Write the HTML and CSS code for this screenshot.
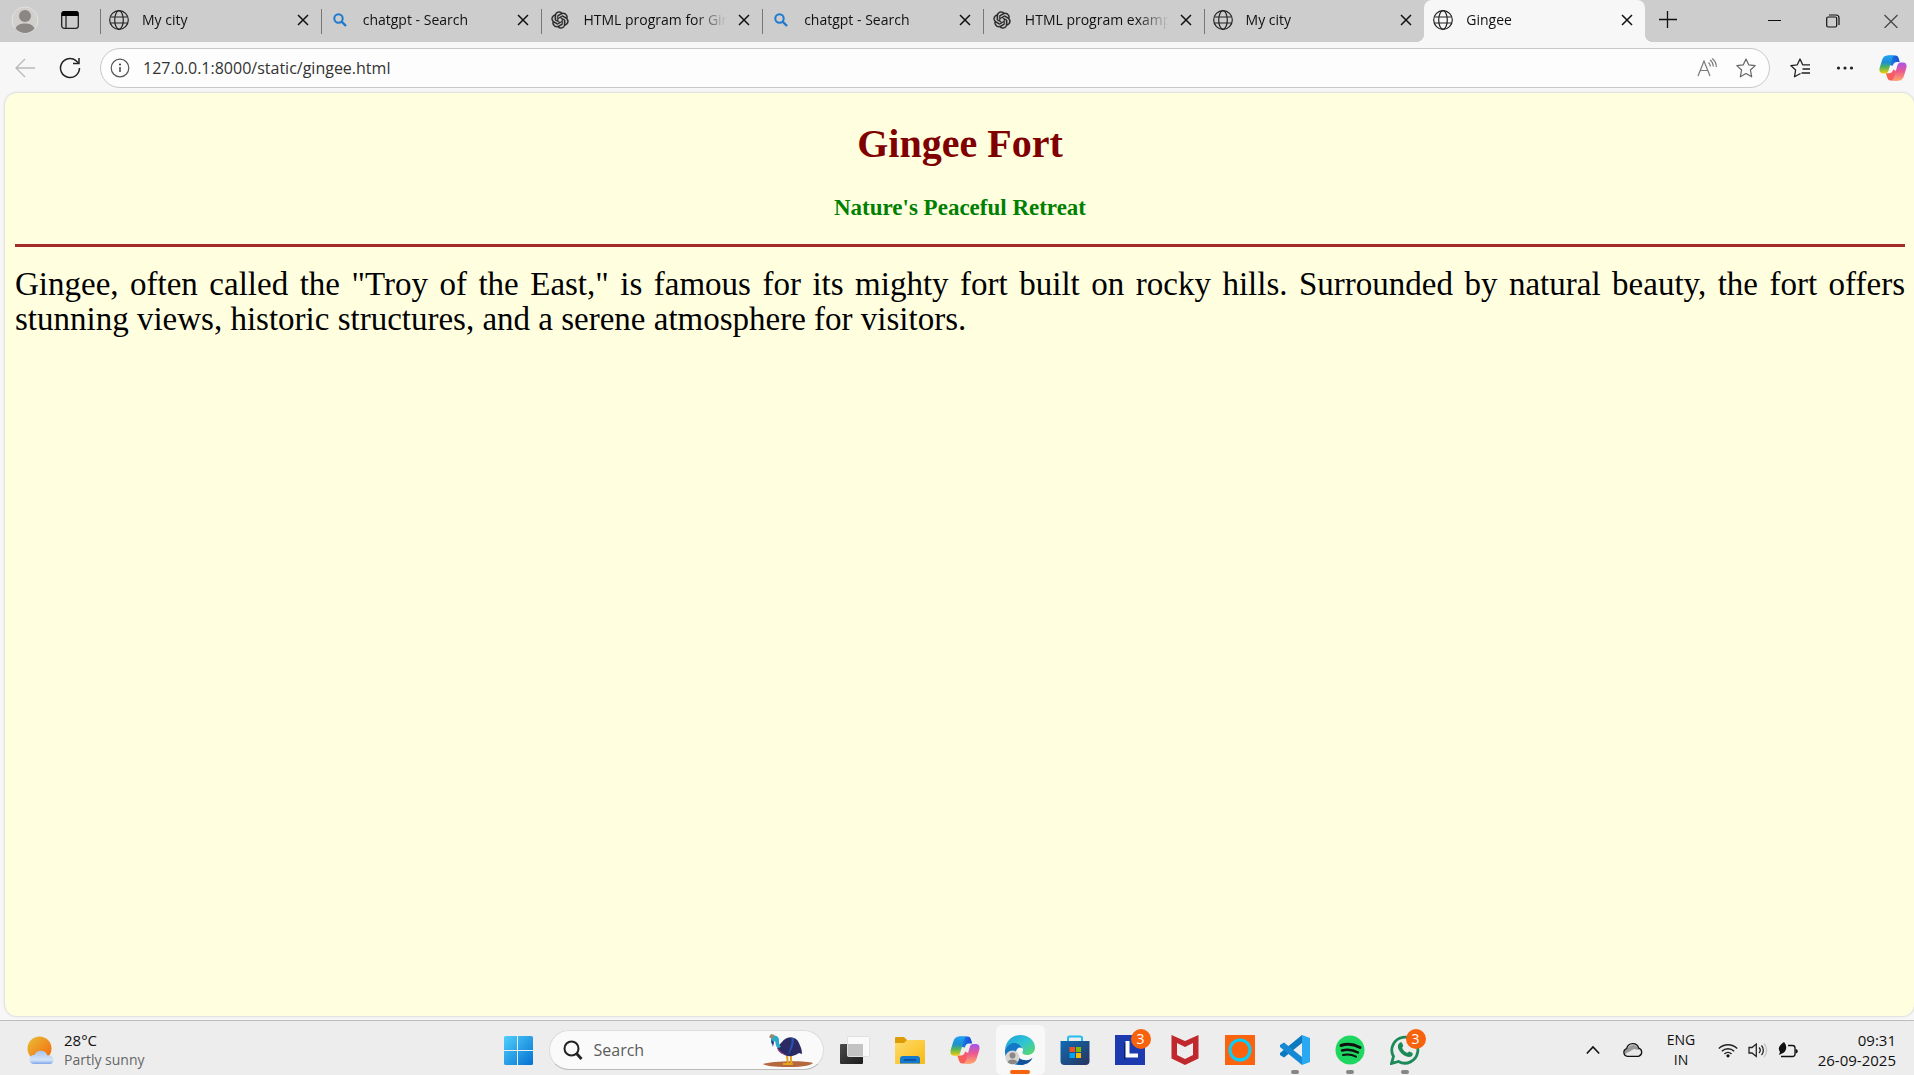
FILE: index.html
```html
<!DOCTYPE html>
<html lang="en">
<head>
<meta charset="utf-8">
<meta name="viewport" content="width=device-width, initial-scale=1">
<title>Gingee</title>
<link rel="stylesheet" href="styles.css">
</head>
<body>
<svg class="defs" width="0" height="0" aria-hidden="true">
  <defs>
    <linearGradient id="cp-left" x1="0" y1="0" x2="0" y2="1"><stop offset="0" stop-color="#1ba4f5"/><stop offset=".4" stop-color="#1f8fd0"/><stop offset=".65" stop-color="#52b45c"/><stop offset="1" stop-color="#f4cd0b"/></linearGradient>
    <linearGradient id="cp-right" x1="0" y1="0" x2="0" y2="1"><stop offset="0" stop-color="#a453f0"/><stop offset=".5" stop-color="#ec5a8e"/><stop offset="1" stop-color="#ffa768"/></linearGradient>
    <linearGradient id="cp-top" x1="0" y1="0" x2="1" y2="0"><stop offset="0" stop-color="#1a8be8"/><stop offset="1" stop-color="#1a49d8"/></linearGradient>
    <linearGradient id="cp-bottom" x1="0" y1="0" x2="1" y2="0"><stop offset="0" stop-color="#f6663c"/><stop offset="1" stop-color="#f8528e"/></linearGradient>
    <linearGradient id="win" x1="0" y1="0" x2="1" y2="1"><stop offset="0" stop-color="#4fd0fb"/><stop offset="1" stop-color="#0470d2"/></linearGradient>
    <linearGradient id="sun" x1="0" y1="0" x2="1" y2="1"><stop offset="0" stop-color="#e8c036"/><stop offset="1" stop-color="#f5640c"/></linearGradient>
    <linearGradient id="cloud" x1="0" y1="0" x2="0" y2="1"><stop offset="0" stop-color="#a9c4f2"/><stop offset=".7" stop-color="#d5e4f8"/><stop offset="1" stop-color="#7fa6ea"/></linearGradient>
    <linearGradient id="dark" x1="0" y1="0" x2="1" y2="1"><stop offset="0" stop-color="#4a4a4a"/><stop offset="1" stop-color="#1c1c1c"/></linearGradient>
    <linearGradient id="folder" x1="0" y1="0" x2="1" y2="1"><stop offset="0" stop-color="#ffdc6c"/><stop offset="1" stop-color="#f8b912"/></linearGradient>
    <linearGradient id="edge-top" x1="0" y1="0" x2="1" y2="1"><stop offset="0" stop-color="#1c9fdc"/><stop offset=".5" stop-color="#2fc4d4"/><stop offset="1" stop-color="#5edb58"/></linearGradient>
    <linearGradient id="store" x1="0" y1="0" x2="1" y2="1"><stop offset="0" stop-color="#0f6cb5"/><stop offset="1" stop-color="#28335c"/></linearGradient>
    <symbol id="globe" viewBox="0 0 20 20"><g fill="none" stroke="#222" stroke-width="1.2"><circle cx="10" cy="10" r="9.3"/><ellipse cx="10" cy="10" rx="4.3" ry="9.3"/><path d="M1.5 7h17M1.5 13h17"/></g></symbol>
    <symbol id="lens" viewBox="0 0 20 20"><g fill="none" stroke="#1b79cf" stroke-width="2"><circle cx="8.5" cy="8.5" r="4.2"/><path d="m11.5 11.5 4.5 4.5" stroke-width="2.4"/></g></symbol>
    <symbol id="knot" viewBox="-2 -2 28 28"><path fill="#222" stroke="#222" stroke-width=".5" d="M22.2819 9.8211a5.9847 5.9847 0 0 0-.5157-4.9108 6.0462 6.0462 0 0 0-6.5098-2.9A6.0651 6.0651 0 0 0 4.9807 4.1818a5.9847 5.9847 0 0 0-3.9977 2.9 6.0462 6.0462 0 0 0 .7427 7.0966 5.98 5.98 0 0 0 .511 4.9107 6.051 6.051 0 0 0 6.5146 2.9001A5.9847 5.9847 0 0 0 13.2599 24a6.0557 6.0557 0 0 0 5.7718-4.2058 5.9894 5.9894 0 0 0 3.9977-2.9001 6.0557 6.0557 0 0 0-.7475-7.0729zm-9.022 12.6081a4.4755 4.4755 0 0 1-2.8764-1.0408l.1419-.0804 4.7783-2.7582a.7948.7948 0 0 0 .3927-.6813v-6.7369l2.02 1.1686a.071.071 0 0 1 .038.052v5.5826a4.504 4.504 0 0 1-4.4945 4.4944zm-9.6607-4.1254a4.4708 4.4708 0 0 1-.5346-3.0137l.142.0852 4.783 2.7582a.7712.7712 0 0 0 .7806 0l5.8428-3.3685v2.3324a.0804.0804 0 0 1-.0332.0615L9.74 19.9502a4.4992 4.4992 0 0 1-6.1408-1.6464zM2.3408 7.8956a4.485 4.485 0 0 1 2.3655-1.9728V11.6a.7664.7664 0 0 0 .3879.6765l5.8144 3.3543-2.0201 1.1685a.0757.0757 0 0 1-.071 0l-4.8303-2.7865A4.504 4.504 0 0 1 2.3408 7.872zm16.5963 3.8558L13.1038 8.364 15.1192 7.2a.0757.0757 0 0 1 .071 0l4.8303 2.7913a4.4944 4.4944 0 0 1-.6765 8.1042v-5.6772a.79.79 0 0 0-.407-.667zm2.0107-3.0231l-.142-.0852-4.7735-2.7818a.7759.7759 0 0 0-.7854 0L9.409 9.2297V6.8974a.0662.0662 0 0 1 .0284-.0615l4.8303-2.7866a4.4992 4.4992 0 0 1 6.6802 4.66zM8.3065 12.863l-2.02-1.1638a.0804.0804 0 0 1-.038-.0567V6.0742a4.4992 4.4992 0 0 1 7.3757-3.4537l-.142.0805L8.704 5.459a.7948.7948 0 0 0-.3927.6813zm1.0976-2.3654l2.602-1.4998 2.6069 1.4998v2.9994l-2.5974 1.4997-2.6067-1.4997Z"/></symbol>
    <symbol id="cross" viewBox="0 0 20 20"><path d="m5 5 10 10M15 5 5 15" fill="none" stroke="#111" stroke-width="1.5"/></symbol>
    <symbol id="copilot" viewBox="0 0 30 30">
      <path fill="url(#cp-top)" d="M9 1.500h8.500c2 0 3 1 3.700 3.500l1 3.500h-3c-2.600 0-3.500 1.200-4.400 4L12 12z"/>
      <path fill="url(#cp-bottom)" d="M21 28.500h-8.500c-2 0-3-1-3.700-3.500l-1.500-4.500h3.500c2.600 0 3.500-1.200 4.400-4L18 18z"/>
      <path fill="url(#cp-left)" d="M9.500 1.500h7.500c-1.700.4-2.600 2-3.300 4.300l-3.400 11.700c-.7 2.300-1.600 3.300-3.800 3.300H4.200C.8 20.800-.2 18 .8 14.500L3.300 6.500c1-3.500 3-5 6.200-5z"/>
      <path fill="url(#cp-right)" d="M20.500 28.500H13c1.700-.4 2.600-2 3.300-4.300l3.400-11.900c.7-2.300 1.600-3.300 3.800-3.300h2.300c3.400 0 4.400 2.800 3.400 6.300l-2.500 8.200c-1 3.500-3 5-6.200 5z"/>
    </symbol>
  </defs>
</svg>

<header class="browser">
  <div class="tabstrip">
    <div class="tabstrip-tools">
      <button class="icon-button" type="button" aria-label="Profile"><svg width="28" height="28" viewBox="0 0 28 28"><circle cx="14" cy="14" r="13" fill="#d2d0ce" stroke="#e4e2de"/><circle cx="14" cy="10" r="6" fill="#8b8785"/><path d="M4.500 22.500C6 18.500 10 17.500 14 17.500s8 1 9.500 5A13 13 0 0 1 14 27a13 13 0 0 1-9.500-4.500z" fill="#8b8785"/></svg></button>
      <button class="icon-button" type="button" aria-label="Tab actions"><svg width="20" height="20" viewBox="0 0 20 20"><rect x="1.700" y="1.700" width="16.600" height="16.600" rx="2.500" fill="none" stroke="#222" stroke-width="1.300"/><path d="M1.500 6V3.500a2.500 2.500 0 0 1 2.500-2.500h12a2.500 2.500 0 0 1 2.500 2.500V6z" fill="#000"/><path d="M6 6v12" stroke="#222" stroke-width="1.300"/></svg></button>
    </div>
    <nav class="tabs" aria-label="Open tabs">
      <div class="tab"><svg class="tab-icon"><use href="#globe"/></svg><a class="tab-title" href="#">My city</a><button class="tab-close" type="button" aria-label="Close tab"><svg><use href="#cross"/></svg></button></div>
      <div class="tab"><svg class="tab-icon"><use href="#lens"/></svg><a class="tab-title" href="#">chatgpt - Search</a><button class="tab-close" type="button" aria-label="Close tab"><svg><use href="#cross"/></svg></button></div>
      <div class="tab"><svg class="tab-icon"><use href="#knot"/></svg><a class="tab-title" href="#">HTML program for Gingee</a><button class="tab-close" type="button" aria-label="Close tab"><svg><use href="#cross"/></svg></button></div>
      <div class="tab"><svg class="tab-icon"><use href="#lens"/></svg><a class="tab-title" href="#">chatgpt - Search</a><button class="tab-close" type="button" aria-label="Close tab"><svg><use href="#cross"/></svg></button></div>
      <div class="tab"><svg class="tab-icon"><use href="#knot"/></svg><a class="tab-title" href="#">HTML program example</a><button class="tab-close" type="button" aria-label="Close tab"><svg><use href="#cross"/></svg></button></div>
      <div class="tab"><svg class="tab-icon"><use href="#globe"/></svg><a class="tab-title" href="#">My city</a><button class="tab-close" type="button" aria-label="Close tab"><svg><use href="#cross"/></svg></button></div>
      <div class="tab tab-active"><svg class="tab-icon"><use href="#globe"/></svg><a class="tab-title" href="#" aria-current="page">Gingee</a><button class="tab-close" type="button" aria-label="Close tab"><svg><use href="#cross"/></svg></button></div>
    </nav>
    <button class="icon-button" type="button" aria-label="New tab"><svg width="20" height="20" viewBox="0 0 20 20"><path d="M1 9.500h18M9.500 1v17" stroke="#111" stroke-width="1.300"/></svg></button>
    <div class="window-controls">
      <button class="window-button" type="button" aria-label="Minimise"><svg width="14" height="14" viewBox="0 0 14 14"><path d="M0 6.500h13" stroke="#111"/></svg></button>
      <button class="window-button" type="button" aria-label="Restore"><svg width="14" height="14" viewBox="0 0 14 14" fill="none" stroke="#111" stroke-width="1.200"><rect x=".7" y="3" width="10" height="10" rx="1.500"/><path d="M3 1h7a3 3 0 0 1 3 3v7"/></svg></button>
      <button class="window-button" type="button" aria-label="Close window"><svg width="14" height="14" viewBox="0 0 14 14"><path d="m.5 1 13 13M13.500 1l-13 13" stroke="#444" stroke-width="1.200"/></svg></button>
    </div>
  </div>

  <div class="toolbar">
    <div class="toolbar-nav">
      <button class="icon-button" type="button" aria-label="Back" disabled><svg width="20" height="20" viewBox="0 0 20 20" fill="none" stroke="#b9b9b9" stroke-width="1.300"><path d="M20 10H1M10 1 1 10l9 9"/></svg></button>
      <button class="icon-button" type="button" aria-label="Refresh"><svg width="22" height="22" viewBox="0 0 22 22" fill="none" stroke="#222" stroke-width="1.500"><path d="M20.500 11A9.500 9.500 0 1 1 17 3.700L19.500 6"/><path d="M20 1v5.500h-6"/></svg></button>
    </div>
    <div class="address-bar">
      <svg width="20" height="20" viewBox="0 0 20 20" aria-hidden="true"><circle cx="10" cy="10" r="8.800" fill="none" stroke="#555" stroke-width="1.200"/><circle cx="10" cy="6.500" r="1.100" fill="#444"/><path d="M10 9v5" stroke="#444" stroke-width="1.500"/></svg>
      <input class="address-input" type="text" aria-label="Address" value="127.0.0.1:8000/static/gingee.html">
      <button class="icon-button" type="button" aria-label="Read aloud"><svg width="20" height="20" viewBox="0 0 20 20" fill="none" stroke="#777" stroke-width="1.200"><path d="M1 18 7 3l6 15M3.200 12.500h7.600M11.500 4.500c1.200 1 1.800 2.500 1.800 4M13 2c2.200 1.500 3.200 3.500 3.200 6.500M15 .5c3 2 4.300 5 4.300 8.500"/></svg></button>
      <button class="icon-button" type="button" aria-label="Add to favourites"><svg width="20" height="20" viewBox="0 0 20 20" fill="none" stroke="#666" stroke-width="1.200" stroke-linejoin="round"><path d="m10 1 2.700 5.800 6.500.8-4.800 4.400 1.300 6.800L10 15.500l-5.700 3.300 1.300-6.800L.8 7.600l6.500-.8z"/></svg></button>
    </div>
    <div class="toolbar-actions">
      <button class="icon-button" type="button" aria-label="Favourites"><svg width="20" height="20" viewBox="0 0 20 20" fill="none" stroke="#222" stroke-width="1.300" stroke-linejoin="round"><path d="M10.500 15.500 4.500 18.800l1.100-6.800L.8 7.600l6.500-.8L10 1l2.700 5.800h7.300M12.500 11H20M11.500 15H20"/></svg></button>
      <button class="icon-button" type="button" aria-label="Settings and more"><svg width="20" height="20" viewBox="0 0 20 20" fill="#222"><circle cx="3.500" cy="10" r="1.600"/><circle cx="10" cy="10" r="1.600"/><circle cx="16.500" cy="10" r="1.600"/></svg></button>
      <button class="icon-button copilot-button" type="button" aria-label="Copilot"><svg width="28" height="28"><use href="#copilot"/></svg></button>
    </div>
  </div>
</header>

<main class="page">
  <h1 class="page-title">Gingee Fort</h1>
  <h2 class="page-subtitle">Nature's Peaceful Retreat</h2>
  <hr class="page-rule">
  <p class="page-text">Gingee, often called the "Troy of the East," is famous for its mighty fort built on rocky hills. Surrounded by natural beauty, the fort offers stunning views, historic structures, and a serene atmosphere for visitors.</p>
</main>

<footer class="taskbar">
  <button class="weather" type="button">
    <svg width="28" height="28" viewBox="0 0 28 28" aria-hidden="true"><circle cx="12.500" cy="12.500" r="12" fill="url(#sun)"/><path d="M7 28a4.500 4.500 0 0 1 0-9h.5a7 7 0 0 1 13 .5 4.300 4.300 0 0 1 3 8.500z" fill="url(#cloud)"/></svg>
    <span class="stacked"><span>28°C</span><span class="muted">Partly sunny</span></span>
  </button>

  <div class="dock">
    <button class="app" type="button" aria-label="Start"><svg width="30" height="30" viewBox="0 0 30 30"><path fill="url(#win)" d="M2.500 1H14v14H1V2.500A1.500 1.500 0 0 1 2.500 1zM15 1h13.500A1.500 1.500 0 0 1 30 2.500V15H15zM1 16h13v14H2.500A1.500 1.500 0 0 1 1 28.500zM15 16h15v12.500a1.500 1.500 0 0 1-1.500 1.500H15z"/><path d="M14.500 0v30M0 15.500h30" stroke="#ededed"/></svg></button>
    <div class="search-box">
      <svg width="20" height="20" viewBox="0 0 20 20" fill="none" stroke="#222" stroke-width="2" aria-hidden="true"><circle cx="8.500" cy="8.500" r="7"/><path d="m13.500 13.500 5 5.500" stroke-width="2.800"/></svg>
      <input class="search-input" type="text" aria-label="Search" placeholder="Search">
      <svg width="50" height="34" viewBox="0 0 50 34" aria-hidden="true">
        <path d="M0 31c6-3 42-4 50-1-2 2-8 4-24 4S3 33 0 31z" fill="#b5673d"/>
        <path d="M20 31h10M25 31l-1-8M28 30v-8" stroke="#e8a31c" stroke-width="2" fill="none"/>
        <path d="M14 13c3 0 5-6 10-8 5-2 10 0 12 5 1 3 3 5 3 11l-3-1c-4 3-11 5-16 1-3-2-5-4-6-8z" fill="#2c2a63"/>
        <path d="M28 5c2 2-1 10-3 17 4-5 6-11 6-17z" fill="#2455b5"/>
        <path d="M14 14c3 5 7 7 11 8l-6-1c-3-2-5-4-5-7z" fill="#8b3b82"/>
        <path d="M8 5c3-4 8-2 8 2 0 3 0 5 2 7l-3 1c-3-2-2-5-3-7l-4 3z" fill="#2aa9c9"/><path d="m8 7 3 2-1 5z" fill="#34307c"/><path d="m6 4 2-3 4 1-3 4z" fill="#9e8770"/>
      </svg>
    </div>
    <button class="app" type="button" aria-label="Task view"><svg width="30" height="30" viewBox="0 0 30 30"><rect x="0" y="9" width="23" height="20" rx="1" fill="url(#dark)"/><rect x="7.500" y="1.500" width="22" height="20" rx="1" fill="#fafafa" stroke="#e0e0e0"/><path d="M8 9h15v12H8z" fill="#c3c3c3"/></svg></button>
    <button class="app" type="button" aria-label="File Explorer"><svg width="30" height="30" viewBox="0 0 30 30"><path d="M0 3a1 1 0 0 1 1-1h8l4 4v4H0z" fill="#dd9c06"/><path d="M0 8h9l3-3h17a1 1 0 0 1 1 1v22a1 1 0 0 1-1 1H1a1 1 0 0 1-1-1z" fill="url(#folder)"/><path d="M5 28.500V24a3 3 0 0 1 3-3h14a3 3 0 0 1 3 3v4.500z" fill="#1379d1"/><path d="M9 25h12" stroke="#0a4b92" stroke-width="1.500"/></svg></button>
    <button class="app" type="button" aria-label="Copilot"><svg width="30" height="30"><use href="#copilot"/></svg></button>
    <button class="app app-open app-current" type="button" aria-label="Microsoft Edge"><svg width="30" height="30" viewBox="0 0 30 30"><path d="M0 14C1 6 7 0 15 0c9 0 15 6 15 12.500 0 5-4 7.500-8 7.500-3.500 0-5-1.500-4.500-3 1-2 .5-4-1-5.500C12 7 3 8 0 14z" fill="url(#edge-top)"/><path d="M0 15C2 9 8 7 12 8.500c3 1 5 3 5.500 5-3-2.500-7 0-6.500 5 .5 5 4 9 8 11C8 32-1 25 0 15z" fill="#1179c6"/><path d="M11 17c0 6 7 9 12 8 2-.3 3-1.500 4.500-2C25 28 20 30 16 30c-7-2-9-9-5-13z" fill="#12509b"/><circle cx="7.500" cy="22.500" r="7" fill="#d6d3d1"/><circle cx="7.500" cy="20.500" r="3" fill="#8b8785"/><path d="M2.500 27c1-3.500 9-3.500 10 0-3 3-7 3-10 0z" fill="#8b8785"/></svg></button>
    <button class="app" type="button" aria-label="Microsoft Store"><svg width="30" height="30" viewBox="0 0 30 30"><path d="M8 7V3a1.500 1.500 0 0 1 1.500-1.500h11A1.500 1.500 0 0 1 22 3v4" fill="none" stroke="#24bdf2" stroke-width="2"/><path d="M.5 6h29v20a4 4 0 0 1-4 4h-21a4 4 0 0 1-4-4z" fill="url(#store)"/><path d="M9.500 12H15v5H9.500z" fill="#f25022"/><path d="M16 12h5v5h-5z" fill="#7fba00"/><path d="M9.500 18H15v5H9.500z" fill="#00a4ef"/><path d="M16 18h5v5h-5z" fill="#ffb900"/></svg></button>
    <button class="app" type="button" aria-label="Lenovo Vantage, 3 notifications"><svg width="30" height="30" viewBox="0 0 30 30"><path d="M0 0h30v30H0z" fill="#1d3aae"/><path d="m12 6-3 3v16l3-3z" fill="#0e1f66"/><path d="M12.500 6v14.500H23" fill="none" stroke="#fff" stroke-width="4"/></svg><span class="badge">3</span></button>
    <button class="app" type="button" aria-label="McAfee"><svg width="30" height="30" viewBox="0 0 30 30"><path d="m1.500 0 13.500 6L28.500 0v23.500L15 30 1.500 23.500zM7 8v12l8 4 8-4V8l-8 4z" fill="#c0282d" fill-rule="evenodd"/></svg></button>
    <button class="app" type="button" aria-label="Alexa"><svg width="30" height="30" viewBox="0 0 30 30"><path d="M0 0h30v30H0z" fill="#fa6410"/><circle cx="15" cy="15" r="10" fill="none" stroke="#0bcdf5" stroke-width="3"/><path d="M12 23.500c2 .5 3 1.500 2 3.500l7-4.500z" fill="#0bcdf5"/></svg></button>
    <button class="app app-open" type="button" aria-label="Visual Studio Code"><svg width="30" height="30" viewBox="0 0 30 30"><path d="M22 0v8L4 22.500 0 20v-2z" fill="#0c78be"/><path d="M22 30v-8L4 7.500 0 10v2z" fill="#1688d4"/><path d="m22 0 8 3v24l-8 3z" fill="#2aa8f2"/></svg></button>
    <button class="app app-open" type="button" aria-label="Spotify"><svg width="30" height="30" viewBox="0 0 30 30"><circle cx="15" cy="15" r="14.500" fill="#1ed760"/><g fill="none" stroke="#111" stroke-linecap="round"><path d="M6 10.500c6-2 13-1.200 19 2" stroke-width="3"/><path d="M7 15.500c5.500-1.500 11-.7 16 2" stroke-width="2.400"/><path d="M8 20c4.500-1.200 9-.5 13 1.700" stroke-width="2"/></g></svg></button>
    <button class="app app-open" type="button" aria-label="WhatsApp, 3 notifications"><svg width="30" height="30" viewBox="0 0 30 30"><path d="m1.500 28.500 2-7A13 13 0 1 1 8.500 26.500z" fill="none" stroke="#1c8a58" stroke-width="2.800"/><path d="M10 7.500c1-.5 2 0 2.300 1l.9 2.300c.2.700-1.200 1.700-1 2.200 1 2.300 2.600 3.800 5 4.800.6.200 1.500-1.600 2.200-1.400l2.700 1.300c1.200.6.600 2.500-.1 3.200-1.500 1.400-3.600 1.300-5.500.6-4-1.500-6.500-4-8-7.300-1-2.300-1-5 1.500-6.700z" fill="#1c8a58"/></svg><span class="badge">3</span></button>
  </div>

  <div class="tray">
    <button class="tray-button" type="button" aria-label="Show hidden icons"><svg width="14" height="10" viewBox="0 0 14 10"><path d="m.8 8.500 6.200-6.500 6.200 6.500" fill="none" stroke="#111" stroke-width="1.600"/></svg></button>
    <button class="tray-button" type="button" aria-label="OneDrive"><svg width="20" height="14" viewBox="0 0 20 14"><path d="M4.500 13.300a4 4 0 0 1-.8-7.800 6.200 6.200 0 0 1 12-.3 4.200 4.200 0 0 1-.2 8.100z" fill="#e9e9e9"/><path d="M2 11c-1-3 1-6 3-6 2-4 8-4 10 0l1 2-5-1z" fill="#9a9a9a"/><path d="M4.500 13.300a4 4 0 0 1-.8-7.800 6.200 6.200 0 0 1 12-.3 4.200 4.200 0 0 1-.2 8.100z" fill="none" stroke="#111" stroke-width="1.300"/></svg></button>
    <button class="tray-button language" type="button"><span>ENG</span><span>IN</span></button>
    <button class="tray-button tray-status" type="button" aria-label="Network, sound and battery">
      <svg width="20" height="16" viewBox="0 0 20 16" fill="none" stroke="#222" stroke-width="1.400"><path d="M.8 6.500a13 13 0 0 1 18.400 0M3.800 9.300a9 9 0 0 1 12.400 0M6.500 12a5 5 0 0 1 7 0"/><circle cx="10" cy="13.800" r="1.600" fill="#111" stroke="none"/></svg>
      <svg width="20" height="16" viewBox="0 0 20 16" fill="none" stroke="#222" stroke-width="1.300"><path d="M1 5.500h3L8.300 2v12.500L4 11H1z"/><path d="M11 5.500a4 4 0 0 1 0 5.500M13.500 3.500a7 7 0 0 1 0 9.500"/><path d="M16 1.500c3.500 4 3.500 9.500 0 13.500" stroke="#c4c4c4"/></svg>
      <svg width="20" height="16" viewBox="0 0 20 16"><path d="M10 3.500h4.500A2.500 2.500 0 0 1 17 6v6a2.500 2.500 0 0 1-2.500 2.500H3" fill="none" stroke="#111" stroke-width="1.300"/><path d="M17.500 7c3 0 3 4.500 0 4.500z" fill="#111"/><path d="M6 0c2.500 3 3.500 7 0 10.500L1 13l1-3C-1 6 2 3 6 0z" fill="#111"/></svg>
    </button>
    <button class="tray-button clock" type="button"><span>09:31</span><span>26-09-2025</span></button>
  </div>
</footer>
</body>
</html>
```
FILE: styles.css
```css
* {
  box-sizing: border-box;
}

body {
  margin: 0;
  min-height: 100vh;
  display: flex;
  flex-direction: column;
  background: #f7f7f7;
  color: #111;
  font-family: "Open Sans", "Noto Sans", sans-serif;
  font-size: 15px;
}

.defs {
  position: absolute;
}

button {
  padding: 0;
  border: 0;
  background: none;
  color: inherit;
  font: inherit;
}

svg {
  display: block;
  flex: none;
}

.icon-button {
  display: grid;
  place-items: center;
  flex: none;
  width: 45px;
  height: 40px;
}

/* Tab strip */

.tabstrip {
  display: flex;
  height: 42px;
  background: #cdcdcd;
}

.tabstrip-tools,
.toolbar-nav {
  display: flex;
  flex: none;
  width: 100px;
  padding-left: 2px;
}

.tabs {
  display: grid;
  grid-template-columns: repeat(7, minmax(0, 1fr));
  flex: 0 1 1545px;
  min-width: 0;
}

.tab {
  position: relative;
  display: flex;
  align-items: center;
  padding: 0 8px 2px 9px;
}

.tab::before {
  content: "";
  position: absolute;
  left: 0;
  top: 9px;
  width: 1px;
  height: 25px;
  background: #777;
}

.tab-icon {
  width: 20px;
  height: 20px;
}

.tab-title {
  flex: 1;
  min-width: 0;
  margin: 0 7px 0 13px;
  overflow: hidden;
  white-space: nowrap;
  color: #111;
  font-size: 14px;
  line-height: 20px;
  text-decoration: none;
  mask-image: linear-gradient(to left, transparent, #000 32px);
}

.tab-close {
  width: 20px;
  height: 20px;
}

.tab-close svg {
  width: 20px;
  height: 20px;
}

.tab-active {
  background: #f7f7f7;
  border-radius: 8px 8px 0 0;
}

.tab-active::before,
.tab-active::after {
  content: "";
  position: absolute;
  top: auto;
  bottom: 0;
  width: 8px;
  height: 8px;
}

.tab-active::before {
  left: -8px;
  background: radial-gradient(circle at 0 0, #cdcdcd 8px, #f7f7f7 8px);
}

.tab-active::after {
  right: -8px;
  background: radial-gradient(circle at 100% 0, #cdcdcd 8px, #f7f7f7 8px);
}

.window-controls {
  display: flex;
  gap: 12px;
  margin-left: auto;
}

.window-button {
  display: grid;
  place-items: center;
  width: 46px;
  height: 42px;
}

/* Toolbar */

.toolbar {
  display: flex;
  align-items: center;
  height: 51px;
}

.address-bar {
  display: flex;
  align-items: center;
  flex: 1;
  min-width: 0;
  height: 40px;
  padding: 0 4px 0 9px;
  border: 1px solid #c8c8c8;
  border-radius: 20px;
  background: #fdfdfd;
}

.address-bar .icon-button {
  width: 39px;
}

.address-input,
.search-input {
  flex: 1;
  min-width: 0;
  padding: 0;
  border: 0;
  outline: 0;
  background: none;
  color: #333;
  font: inherit;
}

.address-input {
  margin-left: 13px;
  font-size: 16px;
}

.toolbar-actions {
  display: flex;
  padding-left: 7px;
}

.copilot-button {
  width: 42px;
  margin-left: 5px;
}

/* Document */

.page {
  flex: 1;
  margin: 0 0 4px 5px;
  padding: 28px 9px 28px 10px;
  border-radius: 12px;
  background: #ffffe0;
  box-shadow: 0 0 2px 1px #dcdce0;
  color: #000;
  font-family: Georgia, "Liberation Serif", serif;
}

.page-title,
.page-subtitle {
  margin: 0;
  font-family: "Liberation Serif", serif;
  text-align: center;
}

.page-title {
  color: #800000;
  font-size: 40px;
  line-height: 46px;
}

.page-subtitle {
  margin-top: 27px;
  color: #008000;
  font-size: 23px;
  line-height: 27px;
}

.page-rule {
  height: 3px;
  margin: 23px 0 20px;
  border: 0;
  background: #a52a2a;
}

.page-text {
  margin: 0;
  font-size: 33px;
  line-height: 35px;
  text-align: justify;
}

/* Taskbar */

.taskbar {
  display: grid;
  grid-template-columns: 1fr auto 1fr;
  align-items: center;
  height: 55px;
  padding: 4px 18px 0 27px;
  border-top: 1px solid #bdbdbd;
  background: #ededed;
  line-height: 20px;
}

.weather {
  display: flex;
  align-items: center;
  gap: 9px;
  justify-self: start;
  text-align: left;
}

.stacked {
  display: flex;
  flex-direction: column;
}

.muted {
  color: #666;
  font-size: 14px;
}

.dock {
  display: flex;
  align-items: center;
}

.app {
  position: relative;
  display: grid;
  place-items: center;
  width: 55px;
  height: 50px;
}

.app-current {
  width: 49px;
  margin: 0 3px;
  border-radius: 6px;
  background: #f8f8f8;
}

.app-open::after {
  content: "";
  position: absolute;
  bottom: 1px;
  left: calc(50% - 4px);
  width: 8px;
  height: 4px;
  border-radius: 2px;
  background: #868686;
}

.app-current::after {
  left: calc(50% - 10px);
  width: 20px;
  background: #f7630c;
}

.badge {
  position: absolute;
  top: 4px;
  right: 7px;
  width: 20px;
  height: 20px;
  border-radius: 50%;
  background: #f7630c;
  color: #fff;
  font-size: 14px;
  line-height: 20px;
  text-align: center;
}

.search-box {
  display: flex;
  align-items: center;
  width: 275px;
  height: 40px;
  margin: 0 4px 0 3px;
  padding: 0 10px 0 13px;
  border: 1px solid #dcdcdc;
  border-bottom-color: #bbb;
  border-radius: 20px;
  background: #fafafa;
}

.search-input {
  margin-left: 11px;
  font-size: 16px;
}

.search-input::placeholder {
  color: #5c5c5c;
  opacity: 1;
}

.tray {
  display: flex;
  align-items: center;
  justify-self: end;
}

.tray-button {
  display: grid;
  place-items: center;
  min-width: 40px;
  height: 44px;
}

.language {
  min-width: 56px;
  align-content: center;
  font-size: 14px;
}

.tray-status {
  display: flex;
  align-items: center;
  gap: 10px;
  padding: 0 9px;
}

.clock {
  align-content: center;
  justify-items: end;
  min-width: 89px;
}
```
